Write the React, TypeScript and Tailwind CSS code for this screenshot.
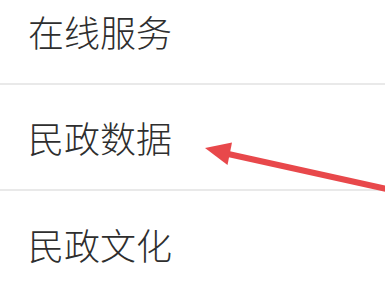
import React from 'react';

const items = ['在线服务', '民政数据', '民政文化'];

// Red annotation arrow drawn over the list, pointing at the second row.
function Arrow() {
  return (
    <svg
      className="pointer-events-none absolute inset-0"
      width={385}
      height={289}
      viewBox="0 0 385 289"
    >
      <line x1={226} y1={153.5} x2={400} y2={192} stroke="#e8484b" strokeWidth={6} />
      <polygon points="205,148 232,142.5 227.5,165" fill="#e8484b" />
    </svg>
  );
}

export default function App() {
  return (
    <div
      className="relative h-[289px] w-[385px] overflow-hidden bg-white"
      style={{ fontFamily: '"Noto Sans CJK SC", "Noto Sans", sans-serif' }}
    >
      <ul className="mt-[-21px] flex flex-col">
        {items.map((label, i) => (
          <li
            key={label}
            className={`box-border flex h-[106px] items-center pl-[28px] ${
              i < items.length - 1 ? 'border-b-2 border-[#e9e9e9]' : ''
            }`}
          >
            <span className="text-[36px] leading-none font-light text-[#2e2e2e]">{label}</span>
          </li>
        ))}
      </ul>
      <Arrow />
    </div>
  );
}
